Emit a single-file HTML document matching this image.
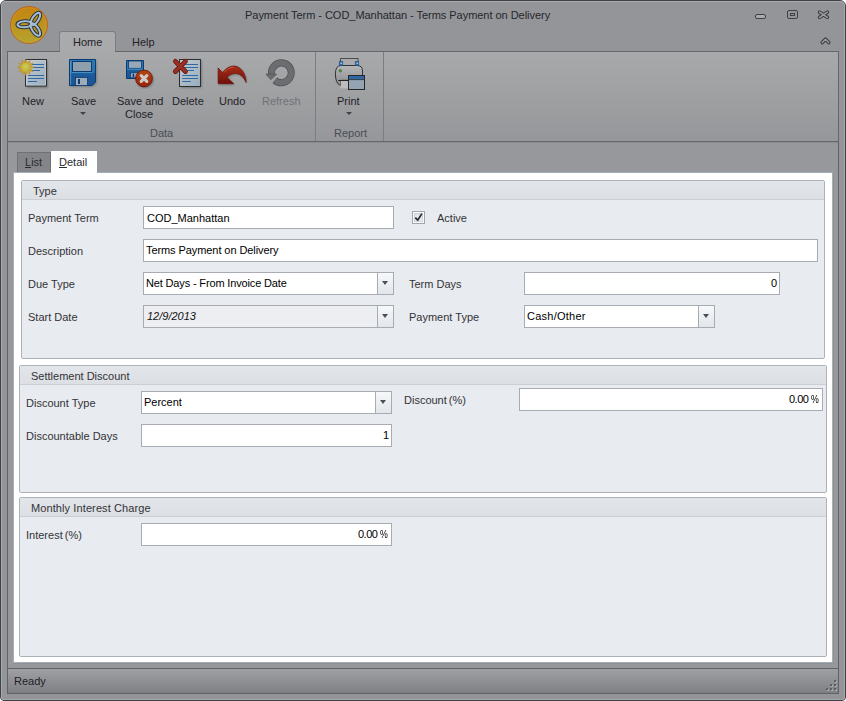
<!DOCTYPE html>
<html><head><meta charset="utf-8">
<style>
*{box-sizing:border-box}
html,body{margin:0;padding:0;width:846px;height:701px;overflow:hidden;background:#ffffff}
body{position:relative;font-family:"Liberation Sans",sans-serif;font-size:11px}
.a{position:absolute}
.t{position:absolute;font:11px/13px "Liberation Sans",sans-serif;white-space:pre}
#win{left:0;top:0;width:846px;height:701px;background:#949598;border:1px solid #3e4247;border-radius:6px 6px 4px 4px}
#hl{left:1px;top:1px;width:844px;height:699px;border-left:1px solid #a9aaac;border-top:1px solid #a9aaac;border-right:1px solid #a6a7a9;border-bottom:1px solid #a4a5a7;border-radius:5px 5px 3px 3px}
#ribbon{left:7px;top:51px;width:832px;height:91px;border:1px solid #65676b;background:linear-gradient(#a8a9aa,#96979a)}
#content{left:7px;top:142px;width:832px;height:527px;border-left:1px solid #606266;border-right:1px solid #606266;background:#97989b}
#status{left:7px;top:668px;width:832px;height:26px;border:1px solid #5f6165;background:linear-gradient(#9fa0a3,#7f8084)}
.gb{position:absolute;border:1px solid #adb2b9;border-radius:2px;background:#e8ebef}
.gh{position:absolute;left:0;top:0;right:0;height:19px;background:linear-gradient(#e2e5e9,#dcdfe3);border-bottom:1px solid #cbcfd4}
.tb{position:absolute;border:1px solid #a7acb3;background:#fff}
.btn{position:absolute;top:0;right:0;width:16px;height:21px;border-left:1px solid #a7acb3;background:linear-gradient(#f6f8fa,#e3e6ea)}
.arr{position:absolute;left:4.2px;top:8px;width:0;height:0;border-left:3.8px solid transparent;border-right:3.8px solid transparent;border-top:4px solid #4c4f54}
.lbl{color:#333337}
.rt{color:#1f2228}
</style></head><body>
<div id="win" class="a"></div>
<div id="hl" class="a"></div>

<!-- logo -->
<svg class="a" style="left:9px;top:5px" width="40" height="40" viewBox="0 0 40 40">
 <defs><linearGradient id="lg" x1="0" y1="0" x2="0" y2="1"><stop offset="0" stop-color="#c6830f"/><stop offset="1" stop-color="#b3a42f"/></linearGradient></defs>
 <circle cx="20" cy="20" r="18.5" fill="url(#lg)" stroke="#bf641a" stroke-width="1"/>
 <circle cx="20" cy="20" r="17.2" fill="none" stroke="#d6a83c" stroke-width="0.8" opacity="0.5"/>
 <g transform="translate(22.4 19.2) scale(0.9) translate(-22 -19)">
 <g fill="none" stroke="#29333c" stroke-width="4.4">
  <ellipse cx="14.5" cy="19" rx="8" ry="3.4" transform="rotate(-3 14.5 19)"/>
  <ellipse cx="26.5" cy="13.3" rx="8" ry="3.4" transform="rotate(-56 26.5 13.3)"/>
  <ellipse cx="26.4" cy="24.9" rx="8" ry="3.4" transform="rotate(56 26.4 24.9)"/>
 </g>
 <g fill="none" stroke="#a6bed2" stroke-width="2.2">
  <ellipse cx="14.5" cy="19" rx="8" ry="3.4" transform="rotate(-3 14.5 19)"/>
  <ellipse cx="26.5" cy="13.3" rx="8" ry="3.4" transform="rotate(-56 26.5 13.3)"/>
  <ellipse cx="26.4" cy="24.9" rx="8" ry="3.4" transform="rotate(56 26.4 24.9)"/>
 </g>
 </g>
</svg>

<div class="t" style="left:245px;top:9px;color:#25272c;letter-spacing:-0.035px">Payment Term - COD_Manhattan - Terms Payment on Delivery</div>

<!-- window buttons -->
<div class="a" style="left:755px;top:14px;width:11px;height:5px;border:1px solid #3e4145;border-radius:2px;background:#a9aaac"></div>
<div class="a" style="left:787px;top:10px;width:11px;height:9px;border:1px solid #3e4145;border-radius:2px"></div>
<div class="a" style="left:790px;top:13px;width:5px;height:3px;border:1px solid #3e4145"></div>
<svg class="a" style="left:816px;top:9px" width="15" height="12" viewBox="0 0 15 12"><path d="M3.6 3.2L11.3 8.3M11.3 3.2L3.6 8.3" stroke="#3a3d41" stroke-width="3.7" stroke-linecap="round"/><path d="M3.6 3.2L11.3 8.3M11.3 3.2L3.6 8.3" stroke="#9d9ea1" stroke-width="1.6" stroke-linecap="round"/></svg>
<svg class="a" style="left:819px;top:35px" width="13" height="11" viewBox="0 0 13 11"><path d="M3.3 7.6L6.5 4.2L9.7 7.6" fill="none" stroke="#3a3d41" stroke-width="3.6" stroke-linecap="round" stroke-linejoin="round"/><path d="M3.3 7.6L6.5 4.2L9.7 7.6" fill="none" stroke="#9a9b9e" stroke-width="1.5" stroke-linecap="round" stroke-linejoin="round"/></svg>

<!-- tabs -->
<div class="a" style="left:59px;top:31px;width:57px;height:21px;border:1px solid #7b7d80;border-bottom:none;border-radius:3px 3px 0 0;background:linear-gradient(#abacae,#a8a9aa)"></div>
<div class="t rt" style="left:73px;top:36px">Home</div>
<div class="t rt" style="left:132px;top:36px">Help</div>

<div id="ribbon" class="a"></div>
<div class="a" style="left:8px;top:51px;width:51px;height:1px;background:#65676b"></div>
<div class="a" style="left:116px;top:51px;width:722px;height:1px;background:#65676b"></div>
<div class="a" style="left:60px;top:51px;width:55px;height:1px;background:#a8a9aa"></div>

<!-- separators -->
<div class="a" style="left:315px;top:52px;width:1px;height:89px;background:#7c7d81"></div>
<div class="a" style="left:383px;top:52px;width:1px;height:89px;background:#7c7d81"></div>

<!-- ribbon labels -->
<div class="t rt" style="left:22px;top:95px">New</div>
<div class="t rt" style="left:71px;top:95px">Save</div>
<div class="t rt" style="left:117px;top:95px">Save and</div>
<div class="t rt" style="left:125px;top:108px">Close</div>
<div class="t rt" style="left:172px;top:95px">Delete</div>
<div class="t rt" style="left:219px;top:95px">Undo</div>
<div class="t" style="left:262px;top:95px;color:#6f7278">Refresh</div>
<div class="t rt" style="left:337px;top:95px">Print</div>
<div class="t" style="left:150px;top:127px;color:#4a4d55">Data</div>
<div class="t" style="left:334px;top:127px;color:#4a4d55">Report</div>
<div class="a" style="left:79.5px;top:112px;width:0;height:0;border-left:3px solid transparent;border-right:3px solid transparent;border-top:3.5px solid #3f4247"></div>
<div class="a" style="left:345.5px;top:112px;width:0;height:0;border-left:3px solid transparent;border-right:3px solid transparent;border-top:3.5px solid #3f4247"></div>

<!-- icons: New -->
<svg class="a" style="left:17px;top:56px" width="34" height="34" viewBox="0 0 34 34">
 <defs><linearGradient id="dg" x1="0" y1="0" x2="1" y2="1"><stop offset="0" stop-color="#c4cacd"/><stop offset="1" stop-color="#98adbf"/></linearGradient>
 <filter id="sh" x="-20%" y="-20%" width="150%" height="150%"><feGaussianBlur stdDeviation="0.9"/></filter></defs>
 <rect x="9.5" y="4.5" width="21" height="27" fill="#000" opacity="0.35" filter="url(#sh)"/>
 <rect x="8.5" y="3.5" width="21" height="26.5" fill="url(#dg)" stroke="#2c2e31"/>
 <rect x="9.5" y="4.5" width="19" height="24.5" fill="none" stroke="#d0d6da" stroke-width="0.7" opacity="0.7"/>
 <g stroke="#2f6aa5" stroke-width="1.1"><path d="M11 8.5h16M11 11.5h16M11 14.5h12M11 19.5h16M11 22.5h16M11 25.5h9"/></g>
 <polygon points="8.90,3.20 10.09,6.96 13.00,4.30 12.15,8.15 16.00,7.30 13.34,10.21 17.10,11.40 13.34,12.59 16.00,15.50 12.15,14.65 13.00,18.50 10.09,15.84 8.90,19.60 7.71,15.84 4.80,18.50 5.65,14.65 1.80,15.50 4.46,12.59 0.70,11.40 4.46,10.21 1.80,7.30 5.65,8.15 4.80,4.30 7.71,6.96" fill="#dcae22" stroke="#b3841c" stroke-width="0.6" stroke-linejoin="round"/>
 <defs><radialGradient id="sg" cx="0.45" cy="0.4" r="0.6"><stop offset="0" stop-color="#d2cc5c"/><stop offset="1" stop-color="#b8b03e"/></radialGradient></defs>
 <circle cx="8.9" cy="11.4" r="4.4" fill="url(#sg)"/>
</svg>
<!-- Save -->
<svg class="a" style="left:67px;top:57px" width="32" height="32" viewBox="0 0 32 32">
 <defs><linearGradient id="fg" x1="0" y1="0" x2="0" y2="1"><stop offset="0" stop-color="#2a7ab2"/><stop offset="0.5" stop-color="#2672ad"/><stop offset="0.52" stop-color="#1c5a9a"/><stop offset="1" stop-color="#1a5494"/></linearGradient></defs>
 <path d="M3.5 3.5H29.5V26L26 29.5H3.5Z" fill="#000" opacity="0.3" filter="url(#sh)"/>
 <path d="M2.5 2.5H28.5V25L25 28.5H2.5Z" fill="url(#fg)" stroke="#0e3a74"/>
 <path d="M3.6 4v24" stroke="#5aa0cc" stroke-width="0.8"/>
 <rect x="5.5" y="4.5" width="19" height="10" fill="#8e9fae" stroke="#0e3a74"/>
 <path d="M5 15.6h20" stroke="#4f98c4" stroke-width="0.9"/>
 <rect x="8.5" y="20.5" width="12" height="8" fill="#9cacb9" stroke="#0e3a74" stroke-width="0.8"/>
 <rect x="11" y="22" width="2" height="5" fill="#0e3a74"/>
</svg>
<!-- Save and Close -->
<svg class="a" style="left:124px;top:57px" width="32" height="32" viewBox="0 0 32 32">
 <defs><linearGradient id="rg" x1="0" y1="0" x2="0" y2="1"><stop offset="0" stop-color="#b4460f"/><stop offset="1" stop-color="#952410"/></linearGradient></defs>
 <path d="M2.5 3.5h17v18h-17z" fill="url(#fg)" stroke="#0e3a74"/>
 <rect x="4.5" y="4" width="13" height="7.3" fill="#97a8b8" stroke="#0e3a74" stroke-width="0.8"/>
 <path d="M3.5 12.2h15" stroke="#4f98c4" stroke-width="0.8"/>
 <rect x="6.6" y="15.8" width="8" height="5" fill="#9cacb9" stroke="#0e3a74" stroke-width="0.7"/>
 <circle cx="21" cy="22.5" r="8.6" fill="#000" opacity="0.3" filter="url(#sh)"/>
 <circle cx="20" cy="21.5" r="8.4" fill="url(#rg)" stroke="#6c1a0c" stroke-width="0.9"/>
 <path d="M17.2 18.7l5.6 5.6M22.8 18.7l-5.6 5.6" stroke="#cdc8c4" stroke-width="3.2" stroke-linecap="round"/>
 <rect x="8.6" y="16.6" width="1.6" height="3.6" fill="#0e3a74"/>
</svg>
<!-- Delete -->
<svg class="a" style="left:170px;top:56px" width="34" height="34" viewBox="0 0 34 34">
 <rect x="10.5" y="4.5" width="21" height="27" fill="#000" opacity="0.35" filter="url(#sh)"/>
 <rect x="9.5" y="3.5" width="21" height="27" fill="url(#dg)" stroke="#2c2e31"/>
 <g stroke="#2f6aa5" stroke-width="1.1"><path d="M12.2 8.5H28M12.2 11.5H28M12.2 14.5H24M12.2 19.5H28M12.2 22.5H28M12.2 25.5H20.8"/></g>
 <path d="M5.35 5.35l10.1 10.1M15.45 5.35l-10.1 10.1" stroke="#6a1a12" stroke-width="4.8" stroke-linecap="round"/>
 <path d="M5.35 5.35l10.1 10.1M15.45 5.35l-10.1 10.1" stroke="#973022" stroke-width="3.2" stroke-linecap="round"/>
</svg>
<!-- Undo -->
<svg class="a" style="left:216px;top:63px" width="34" height="26" viewBox="0 0 34 26">
 <defs><linearGradient id="ug" x1="0" y1="0" x2="0" y2="1"><stop offset="0" stop-color="#a92e18"/><stop offset="1" stop-color="#6e1009"/></linearGradient></defs>
 <path d="M3.1 5.9L7.4 10.6C11 6 15 4 18.5 4C25 4 30.5 10 31.2 20.5C28.5 14.5 24.5 11.5 20.3 11.5C17 11.5 14 13 12 15.4L18.8 21.7H3.1Z" fill="#000" opacity="0.3" filter="url(#sh)"/>
 <path d="M2.1 4.9L6.4 9.6C10 5 14 3 17.5 3C24 3 29.5 9 30.2 19.5C27.5 13.5 23.5 10.5 19.3 10.5C16 10.5 13 12 11 14.4L17.8 20.7H2.1Z" fill="url(#ug)" stroke="#6a120a" stroke-width="0.7"/>
 <path d="M8 9.5C11 6 14 4.3 17.5 4.3" fill="none" stroke="#e07a60" stroke-width="0.7" opacity="0.7"/>
</svg>
<!-- Refresh -->
<svg class="a" style="left:264px;top:57px" width="34" height="34" viewBox="0 0 34 34">
 <path d="M10.84 23.25A9.9 9.9 0 1 0 7.5 16.8" fill="none" stroke="#505154" stroke-width="7.1"/>
 <path d="M10.84 23.25A9.9 9.9 0 1 0 7.5 16.8" fill="none" stroke="#6c6d70" stroke-width="5.6"/>
 <path d="M2 17.2 L12.6 17.2 L6.8 22.6 Z" fill="#6c6d70" stroke="#4e4f52" stroke-width="0.8" stroke-linejoin="round"/>
</svg>
<!-- Print -->
<svg class="a" style="left:334px;top:57px" width="34" height="34" viewBox="0 0 34 34">
 <defs><linearGradient id="pg" x1="0" y1="0" x2="0" y2="1"><stop offset="0" stop-color="#b6b7b9"/><stop offset="1" stop-color="#8a8b8e"/></linearGradient></defs>
 <rect x="6.5" y="1.5" width="17.5" height="7" fill="#a9aaac" stroke="#4c4d50"/>
 <path d="M7 8.5H23Q28.5 8.5 28.5 14V23.3H6.5V28.6Q1.4 26.5 1.4 17Q1.4 8.5 7 8.5Z" fill="url(#pg)" stroke="#303235"/>
 <rect x="5.2" y="4.3" width="3.6" height="4.2" fill="#2f6cab" stroke="#1d4f88" stroke-width="0.5"/>
 <rect x="21.2" y="4.3" width="3.6" height="4.2" fill="#2f6cab" stroke="#1d4f88" stroke-width="0.5"/>
 <rect x="6.5" y="5.6" width="1.6" height="1.2" fill="#c8d4e0"/>
 <rect x="22.5" y="5.6" width="1.6" height="1.2" fill="#c8d4e0"/>
 <circle cx="6.3" cy="13.8" r="1.4" fill="#4f9436" stroke="#35602a" stroke-width="0.5"/>
 <rect x="6.6" y="23.6" width="8" height="7.8" fill="#bdbdbe"/>
 <path d="M4.2 23.5H14.5" stroke="#202225" stroke-width="1"/>
 <rect x="14.5" y="18.5" width="16" height="14" fill="#94a4b2" stroke="#25272a"/>
 <rect x="15" y="19" width="15" height="3.4" fill="#2e67a4"/>
 <path d="M15 22.6H30" stroke="#25272a" stroke-width="0.8"/>
</svg>
<div id="content" class="a"></div>
<div class="a" style="left:8px;top:142px;width:830px;height:1px;background:#8c8d90"></div>

<!-- doc tabs -->
<div class="a" style="left:17px;top:152px;width:34px;height:21px;border:1px solid #6f7175;border-bottom:none;background:#838589"></div>
<div class="t" style="left:25px;top:156px;color:#2a2c30"><u>L</u>ist</div>

<!-- white panel -->
<div class="a" style="left:13px;top:172px;width:821px;height:492px;border-bottom:2px solid #909194;border-right:1px solid #909194"></div>
<div class="a" style="left:13px;top:172px;width:820px;height:491px;background:#ffffff;border:1px solid #a5adb7"></div>
<div class="a" style="left:51px;top:151px;width:46px;height:22px;background:#ffffff"></div>
<div class="t" style="left:59px;top:156px;color:#2a2c30"><u>D</u>etail</div>

<!-- Type group -->
<div class="gb" style="left:21px;top:180px;width:804px;height:179px"><div class="gh"></div></div>
<div class="t lbl" style="left:33px;top:185px">Type</div>
<div class="t lbl" style="left:28px;top:212px">Payment Term</div>
<div class="tb" style="left:143px;top:206px;width:251px;height:23px"></div>
<div class="t" style="left:147px;top:212px;color:#000">COD_Manhattan</div>
<div class="a" style="left:412px;top:211px;width:13px;height:13px;border:1px solid #a0a7b0;background:#fbfbfc"></div>
<div class="a" style="left:414px;top:213px;width:9px;height:9px;border:1px solid #d2d4d7;background:linear-gradient(#e2e3e5,#eeeff0)"></div>
<svg class="a" style="left:414px;top:213px" width="10" height="10" viewBox="0 0 10 10"><path d="M1.3 4.6 L3.7 7.2 L7.9 0.6" fill="none" stroke="#2a2d31" stroke-width="1.7" stroke-linejoin="round"/></svg>
<div class="t lbl" style="left:437px;top:212px">Active</div>

<div class="t lbl" style="left:28px;top:245px">Description</div>
<div class="tb" style="left:143px;top:239px;width:675px;height:23px"></div>
<div class="t" style="left:146px;top:244px;color:#000;letter-spacing:-0.08px">Terms Payment on Delivery</div>

<div class="t lbl" style="left:28px;top:278px">Due Type</div>
<div class="tb" style="left:143px;top:272px;width:251px;height:23px"><div class="btn"><div class="arr"></div></div></div>
<div class="t" style="left:146px;top:277px;color:#000;letter-spacing:-0.15px">Net Days - From Invoice Date</div>
<div class="t lbl" style="left:409px;top:278px">Term Days</div>
<div class="tb" style="left:524px;top:272px;width:256px;height:23px"></div>
<div class="t" style="left:771px;top:277px;color:#000">0</div>

<div class="t lbl" style="left:28px;top:311px">Start Date</div>
<div class="tb" style="left:143px;top:305px;width:251px;height:23px;background:#eceef1"><div class="btn"><div class="arr"></div></div></div>
<div class="t" style="left:147px;top:310px;color:#111;font-style:italic">12/9/2013</div>
<div class="t lbl" style="left:409px;top:311px">Payment Type</div>
<div class="tb" style="left:524px;top:305px;width:191px;height:23px"><div class="btn"><div class="arr"></div></div></div>
<div class="t" style="left:527px;top:310px;color:#000;letter-spacing:0.25px">Cash/Other</div>

<!-- Settlement group -->
<div class="gb" style="left:19px;top:365px;width:808px;height:128px"><div class="gh"></div></div>
<div class="t lbl" style="left:31px;top:370px">Settlement Discount</div>
<div class="t lbl" style="left:26px;top:397px">Discount Type</div>
<div class="tb" style="left:141px;top:391px;width:251px;height:23px"><div class="btn"><div class="arr"></div></div></div>
<div class="t" style="left:144px;top:396px;color:#000">Percent</div>
<div class="t lbl" style="left:404px;top:394px;word-spacing:-1px">Discount (%)</div>
<div class="tb" style="left:519px;top:388px;width:304px;height:23px"></div>
<div class="t" style="left:789px;top:393px;color:#000"><span style="letter-spacing:-0.5px">0.00</span><span style="display:inline-block;margin-left:2.5px;transform:scaleX(0.8);transform-origin:0 0">%</span></div>
<div class="t lbl" style="left:26px;top:430px">Discountable Days</div>
<div class="tb" style="left:141px;top:424px;width:251px;height:23px"></div>
<div class="t" style="left:383px;top:429px;color:#000">1</div>

<!-- Monthly group -->
<div class="gb" style="left:19px;top:497px;width:808px;height:160px"><div class="gh"></div></div>
<div class="t lbl" style="left:31px;top:502px;letter-spacing:0.1px">Monthly Interest Charge</div>
<div class="t lbl" style="left:26px;top:529px;word-spacing:-1px">Interest (%)</div>
<div class="tb" style="left:141px;top:523px;width:251px;height:23px"></div>
<div class="t" style="left:358px;top:528px;color:#000"><span style="letter-spacing:-0.5px">0.00</span><span style="display:inline-block;margin-left:2.5px;transform:scaleX(0.8);transform-origin:0 0">%</span></div>

<!-- status -->
<div id="status" class="a"></div>
<div class="t" style="left:14px;top:675px;color:#1f2126">Ready</div>
<svg class="a" style="left:826px;top:680px" width="12" height="12" viewBox="0 0 12 12">
 <g fill="#a9aaac"><rect x="9" y="1" width="2" height="2"/><rect x="5" y="5" width="2" height="2"/><rect x="9" y="5" width="2" height="2"/><rect x="1" y="9" width="2" height="2"/><rect x="5" y="9" width="2" height="2"/><rect x="9" y="9" width="2" height="2"/></g>
 <g fill="#5d5f63"><rect x="8" y="0" width="2" height="2"/><rect x="4" y="4" width="2" height="2"/><rect x="8" y="4" width="2" height="2"/><rect x="0" y="8" width="2" height="2"/><rect x="4" y="8" width="2" height="2"/><rect x="8" y="8" width="2" height="2"/></g>
</svg>
</body></html>
